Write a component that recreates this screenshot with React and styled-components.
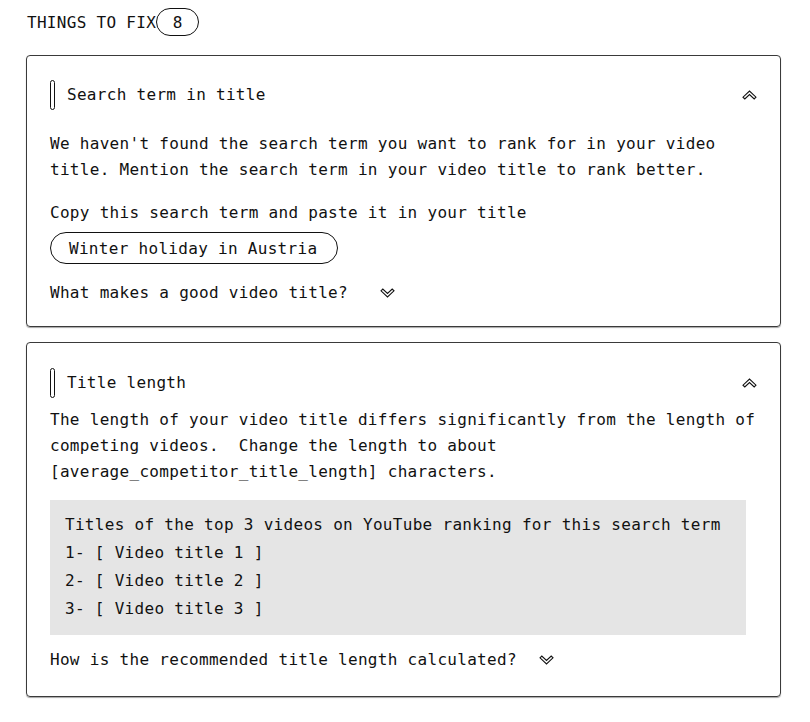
import React from "react";
import styled, { createGlobalStyle } from "styled-components";

const GlobalStyle = createGlobalStyle`
  body {
    margin: 0;
    background: #ffffff;
    color: #111111;
    font-family: "DejaVu Sans Mono", "Liberation Mono", monospace;
    font-size: 16px;
    letter-spacing: 0.3px;
  }
`;

const Chevron = ({ up }) => (
  <ChevronSvg width="15" height="10" viewBox="0 0 15 10" $up={up}>
    <polygon
      points="1,2.8 2.8,1 7.5,5.5 12.2,1 14,2.8 7.5,9"
      fill="#fff"
      stroke="#111"
      strokeWidth="1.1"
      strokeLinejoin="miter"
    />
  </ChevronSvg>
);

const TopicCard = ({ title, children, gap }) => (
  <Card>
    <CardHeader>
      <Bar />
      <CardTitle>{title}</CardTitle>
      <Chevron up />
    </CardHeader>
    <CardBody $gap={gap}>{children}</CardBody>
  </Card>
);

const App = () => {
  return (
    <Page>
      <GlobalStyle />
      <Heading>
        THINGS TO FIX
        <Count>8</Count>
      </Heading>

      <TopicCard title="Search term in title" gap={22}>
        <Paragraph>
          We haven't found the search term you want to rank for in your video
          title. Mention the search term in your video title to rank better.
        </Paragraph>
        <Paragraph $top={17}>Copy this search term and paste it in your title</Paragraph>
        <Term>Winter holiday in Austria</Term>
        <More $top={16} $gap={32}>
          What makes a good video title?
          <Chevron />
        </More>
      </TopicCard>

      <TopicCard title="Title length" gap={10}>
        <Paragraph>
          The length of your video title differs significantly from the length of
          competing videos.&nbsp; Change the length to about
          <br />
          [average_competitor_title_length] characters.
        </Paragraph>
        <Competitors>
          <li>Titles of the top 3 videos on YouTube ranking for this search term</li>
          <li>1- [ Video title 1 ]</li>
          <li>2- [ Video title 2 ]</li>
          <li>3- [ Video title 3 ]</li>
        </Competitors>
        <More $top={12} $gap={22}>
          How is the recommended title length calculated?
          <Chevron />
        </More>
      </TopicCard>
    </Page>
  );
};

export default App;

const Page = styled.div`
  width: 755px;
  padding: 8px 0 20px 26px;
  display: flex;
  flex-direction: column;
  gap: 15px;
`;

const Heading = styled.h2`
  margin: 0 0 4px 1px;
  display: flex;
  align-items: center;
  font-size: 16px;
  font-weight: normal;
  letter-spacing: 0.3px;
  height: 28px;
`;

const Count = styled.span`
  display: inline-flex;
  align-items: center;
  justify-content: center;
  width: 41px;
  height: 26px;
  border: 1px solid #111;
  border-radius: 14px;
`;

const Card = styled.section`
  border: 1px solid #3a3a3a;
  border-radius: 4px;
  box-shadow: 0 1px 1px rgba(0, 0, 0, 0.35);
  padding: 24px 23px 20px 23px;
  &:last-child {
    padding-top: 25px;
    padding-bottom: 23px;
  }
`;

const CardHeader = styled.header`
  display: flex;
  align-items: center;
  height: 29px;
`;

const Bar = styled.span`
  width: 3px;
  height: 28px;
  border: 1px solid #111;
  border-radius: 3px;
  margin-right: 12px;
`;

const CardTitle = styled.h3`
  flex: 1;
  margin: 0;
  font-size: 16px;
  font-weight: normal;
`;

const ChevronSvg = styled.svg`
  display: block;
  flex-shrink: 0;
  transform: ${(p) => (p.$up ? "rotate(180deg)" : "none")};
`;

const CardBody = styled.div`
  margin-top: ${(p) => p.$gap}px;
`;

const Paragraph = styled.p`
  margin: ${(p) => p.$top || 0}px 0 0;
  line-height: 26px;
`;

const Term = styled.div`
  display: inline-flex;
  align-items: center;
  height: 30px;
  margin-top: 6px;
  padding: 0 20px 0 18px;
  border: 1px solid #111;
  border-radius: 16px;
`;

const More = styled.div`
  display: flex;
  align-items: center;
  gap: ${(p) => p.$gap}px;
  margin-top: ${(p) => p.$top}px;
  line-height: 26px;
`;

const Competitors = styled.ul`
  list-style: none;
  margin: 15px 11px 0 0;
  padding: 11px 15px 12px;
  background: #e5e5e5;
  line-height: 28px;
`;
